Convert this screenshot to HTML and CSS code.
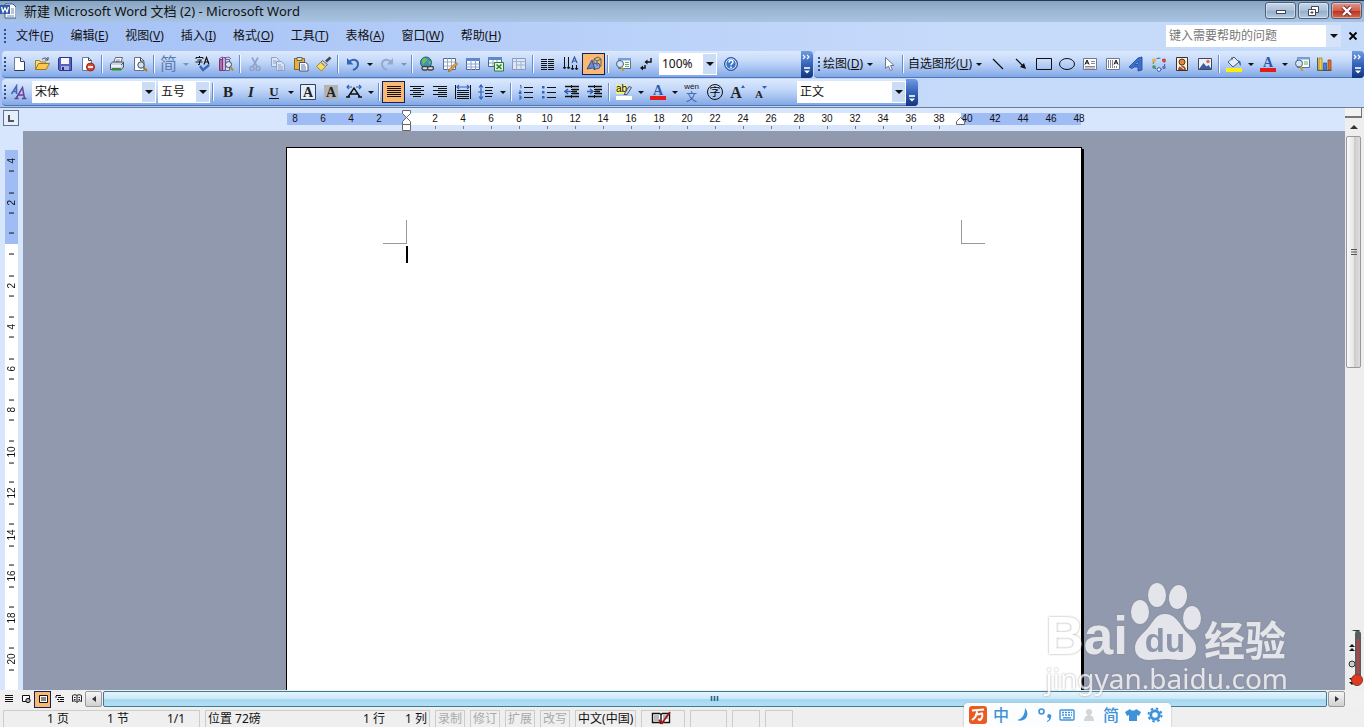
FILE: index.html
```
<!DOCTYPE html>
<html lang="zh-CN">
<head>
    <meta charset="UTF-8">
    <meta name="viewport" content="width=device-width, initial-scale=1.0">
    <title>新建 Microsoft Word 文档 (2) - Microsoft Word</title>
    <link rel="stylesheet" href="styles.css">
</head>
<body>

    <header class="titlebar">
        <svg class="app-icon" viewBox="0 0 16 16"><path d="M5 1h8l3 3v11H5z" fill="#fff" stroke="#3a5a94"/><path d="M11 6h3M11 8h3M11 10h3M7 13h7" stroke="#6d87b8"/><path d="M0 2h10v9H0z" fill="#2f5aa8"/><path d="M1.500 4l1.500 5 2-4 2 4 1.500-5" fill="none" stroke="#fff" stroke-width="1.300"/></svg>
        <h1 class="title">新建 Microsoft Word 文档 (2) - Microsoft Word</h1>
        <div class="win-btns">
            <button class="win" aria-label="最小化"><svg viewBox="0 0 14 12"><rect x="2.500" y="5.500" width="9" height="3" fill="#fff" stroke="#445"/></svg></button>
            <button class="win" aria-label="还原"><svg viewBox="0 0 14 12"><path d="M4.500 1.500h7v6h-7z" fill="#fff" stroke="#445"/><path d="M1.500 4.500h7v6h-7z" fill="#fff" stroke="#445"/><path d="M4 7h2v1H4z" fill="#99b" stroke="#445"/></svg></button>
            <button class="win win-close" aria-label="关闭"><svg viewBox="0 0 14 12"><path d="M3 2l8 8M11 2l-8 8" stroke="#723" stroke-width="4"/><path d="M3 2l8 8M11 2l-8 8" stroke="#fff" stroke-width="2.400"/></svg></button>
        </div>
    </header>

    <nav class="menubar">
        <i class="grip"></i>
        <button class="menu">文件(<u>F</u>)</button>
        <button class="menu">编辑(<u>E</u>)</button>
        <button class="menu">视图(<u>V</u>)</button>
        <button class="menu">插入(<u>I</u>)</button>
        <button class="menu">格式(<u>O</u>)</button>
        <button class="menu">工具(<u>T</u>)</button>
        <button class="menu">表格(<u>A</u>)</button>
        <button class="menu">窗口(<u>W</u>)</button>
        <button class="menu">帮助(<u>H</u>)</button>
        <div class="ask">
            <input class="ask-input" type="text" placeholder="键入需要帮助的问题" aria-label="键入需要帮助的问题">
            <button class="ask-arrow dd" aria-label="展开"></button>
        </div>
        <button class="doc-close" aria-label="关闭文档"><svg viewBox="0 0 10 10"><path d="M1.500 1.500l7 7M8.500 1.500l-7 7" stroke="#000" stroke-width="1.800"/></svg></button>
    </nav>

    <div class="bars">
        <div class="toolbar toolbar-main">
            <i class="grip"></i>
            <button class="btn" aria-label="新建"><svg viewBox="0 0 16 16"><path d="M3.500 1.500h6l4 4v9h-10z" fill="#fff" stroke="#6d7f9f"/><path d="M9.500 1.500v4h4" fill="#dbe4f2" stroke="#3b4c70"/><path d="M13.500 6v8.500h-10" fill="none" stroke="#2b3a5a"/></svg></button>
            <button class="btn" aria-label="打开"><svg viewBox="0 0 16 16"><path d="M1.500 13.500v-9h4l1 1.500h5v2.500" fill="#f7dc80" stroke="#a8812b"/><path d="M1.500 13.500l3-6h11l-3.500 6z" fill="#f9c84c" stroke="#9c7420"/><path d="M8 3.500c2-2 4-2 5.500 0M14 1v3h-3" fill="none" stroke="#444"/></svg></button>
            <button class="btn" aria-label="保存"><svg viewBox="0 0 16 16"><path d="M1.500 2.500l1-1h12v13h-12l-1-1z" fill="#5660c0" stroke="#2e3786"/><path d="M4 2h8v6H4z" fill="#f4f6ff"/><path d="M4 10h8v4H4z" fill="#a7aedd"/><path d="M5 11h2v3H5z" fill="#28306e"/></svg></button>
            <button class="btn" aria-label="权限"><svg viewBox="0 0 16 16"><path d="M2.500 1.500h6l3 3v10h-9z" fill="#fff" stroke="#667a9e"/><path d="M8.500 1.500v3h3" fill="none" stroke="#445"/><circle cx="10.500" cy="11" r="4" fill="#d8472f" stroke="#962817"/><path d="M8 11h5" stroke="#fff" stroke-width="1.800"/></svg></button>
            <i class="sep"></i>
            <button class="btn" aria-label="打印"><svg viewBox="0 0 16 16"><path d="M4.500 7l2-5.500h7l-2 5.500" fill="#fff" stroke="#667"/><path d="M7 4h4M6.500 5.500h4" stroke="#88a"/><path d="M1.500 8l2-2h11v5l-2 2.500h-11z" fill="#ccd3dc" stroke="#485468"/><path d="M2 9h10v2H2z" fill="#eef"/><path d="M3 12h9v2.500H3z" fill="#388b35"/><path d="M12 9l2.500-2.500" stroke="#485468"/></svg></button>
            <button class="btn" aria-label="打印预览"><svg viewBox="0 0 16 16"><path d="M2.500 1.500h6l3.500 3.500v9.500h-9.500z" fill="#fff" stroke="#5e7196"/><path d="M8.500 1.500v3.500h3.500" fill="none" stroke="#445"/><circle cx="9" cy="9" r="3.200" fill="#cde3f2" stroke="#444c58"/><path d="M11.500 11.500l3.500 3.500" stroke="#a8771d" stroke-width="2"/></svg></button>
            <i class="sep"></i>
            <button class="btn glyph-jian" aria-label="简繁转换">简</button><button class="dd dim" aria-label="更多"></button>
            <button class="btn" aria-label="拼写和语法"><svg viewBox="0 0 16 16"><path d="M1 3V1.500h7V3M4.500 0v1.500M2.500 4h4l-2 1.500V8.500h-1.500M.500 6h7" fill="none" stroke="#111"/><path d="M9 8.500l2.500-7 2.500 7M10 6h4" fill="none" stroke="#111" stroke-width="1.200"/><path d="M5 10l3 4 6-5" fill="none" stroke="#3b66ba" stroke-width="2.400"/></svg></button>
            <button class="btn" aria-label="信息检索"><svg viewBox="0 0 16 16"><path d="M1.500 3.500h3v11h-3z" fill="#b56ba8" stroke="#703b78"/><path d="M4.500 1.500h3v13h-3z" fill="#d5a8d6" stroke="#703b78"/><path d="M7.500 3.500h4v11h-4z" fill="#d4dff5" stroke="#58689a"/><path d="M1 3l3-2 3 1 4-1 2 2" fill="none" stroke="#8a5a9c"/><circle cx="10.500" cy="8.500" r="3" fill="#d8e8f4" stroke="#404860"/><path d="M12.500 11l2.500 3.500" stroke="#b28a22" stroke-width="2"/></svg></button>
            <i class="sep"></i>
            <button class="btn" aria-label="剪切"><svg viewBox="0 0 16 16"><path d="M5 1.500l5 9M11 1.500l-5 9" stroke="#8fa1c4" stroke-width="1.600"/><circle cx="5" cy="12.500" r="2" fill="none" stroke="#8fa1c4" stroke-width="1.400"/><circle cx="11" cy="12.500" r="2" fill="none" stroke="#8fa1c4" stroke-width="1.400"/></svg></button>
            <button class="btn" aria-label="复制"><svg viewBox="0 0 16 16"><path d="M1.500 1.500h5l2.500 2.500v6.500h-7.500z" fill="#d8e3f5" stroke="#8fa1c4"/><path d="M6.500 5.500h5l3 3v6h-8z" fill="#d8e3f5" stroke="#8fa1c4"/><path d="M3 5h3M3 7h3M8 9h3M8 11h5M8 13h5" stroke="#8fa1c4"/></svg></button>
            <button class="btn" aria-label="粘贴"><svg viewBox="0 0 16 16"><path d="M1.500 2.500h10v11h-10z" fill="#e8b23a" stroke="#8e651a"/><path d="M4 1.500h5v3H4z" fill="#ddd" stroke="#665"/><path d="M6.500 6.500h6l2.500 2v6.500h-8.500z" fill="#fff" stroke="#3f5686"/><path d="M8 9h4M8 11h5M8 13h5" stroke="#5a76ac"/></svg></button>
            <button class="btn" aria-label="格式刷"><svg viewBox="0 0 16 16"><path d="M14.500 1.500l-4.500 4" stroke="#445" stroke-width="2.600"/><path d="M6.500 4.500l5 4-2 2-5-4z" fill="#c9ccd6" stroke="#667"/><path d="M4.500 6.500l5 4-4 4.500-5-4.500z" fill="#f5dc62" stroke="#a58a24"/></svg></button>
            <i class="sep"></i>
            <button class="btn" aria-label="撤消"><svg viewBox="0 0 16 16"><path d="M4 6c4-4 9-2 9 2 0 3-2 5-5 6" fill="none" stroke="#3563b5" stroke-width="2"/><path d="M2 2v6.500h6.500z" fill="#3563b5"/></svg></button><button class="dd" aria-label="撤消列表"></button>
            <button class="btn" aria-label="恢复"><svg viewBox="0 0 16 16"><path d="M12 6c-4-4-9-2-9 2 0 3 2 5 5 6" fill="none" stroke="#94a9d0" stroke-width="2"/><path d="M14 2v6.500h-6.500z" fill="#94a9d0"/></svg></button><button class="dd dim" aria-label="恢复列表"></button>
            <i class="sep"></i>
            <button class="btn" aria-label="超链接"><svg viewBox="0 0 16 16"><circle cx="7" cy="6.500" r="5.500" fill="#3b94b8" stroke="#2c5c80"/><path d="M3 4c2-3 5-2 5 0s-3 2-3 4-2 0-2-4zM9 6l3-1-1 4z" fill="#71bd55"/><rect x="3" y="10.500" width="6" height="3.500" rx="1.700" fill="#dde" stroke="#444" stroke-width="1.400"/><rect x="8.500" y="10.500" width="6" height="3.500" rx="1.700" fill="#dde" stroke="#444" stroke-width="1.400"/></svg></button>
            <button class="btn" aria-label="表格和边框"><svg viewBox="0 0 16 16"><path d="M1.500 2.500h12v11h-12z" fill="#fff" stroke="#56688e"/><path d="M1.500 6h12M1.500 10h12M5.500 2.500v11M9.500 2.500v11" stroke="#98a8c8"/><path d="M7 13.500l7-7 1.500 1.500-7 7-2 .500z" fill="#f2a93a" stroke="#8a5b1a" stroke-width=".8"/></svg></button>
            <button class="btn" aria-label="插入表格"><svg viewBox="0 0 16 16"><path d="M1.500 2.500h13v11h-13z" fill="#fff" stroke="#45639e"/><path d="M1 2h14v3H1z" fill="#5e87ce"/><path d="M1.500 8h13M1.500 11h13M6 4v10M10.500 4v10" stroke="#8ba2cf"/></svg></button>
            <button class="btn" aria-label="插入 Excel 工作表"><svg viewBox="0 0 16 16"><path d="M.500 1.500h13v9h-13z" fill="#fff" stroke="#45639e"/><path d="M0 1h14v3H0z" fill="#5e87ce"/><path d="M1 7h12M5 4v6M9 4v6" stroke="#8ba2cf"/><path d="M6.500 6.500h9v8.500h-9z" fill="#e6f3e4" stroke="#2a7a35"/><path d="M8.500 8.500l5 4.500M13.500 8.500l-5 4.500" stroke="#28852f" stroke-width="1.600"/></svg></button>
            <button class="btn" aria-label="分栏表"><svg viewBox="0 0 16 16"><path d="M1.500 2.500h13v11h-13z" fill="#dce6f6" stroke="#8799bd"/><path d="M1.500 5.500h13M5.500 2.500v11M5.500 9h9M10 5.500v8" stroke="#a2b1cf"/></svg></button>
            <i class="sep"></i>
            <button class="btn" aria-label="分栏"><svg viewBox="0 0 16 16"><path d="M1 3.500h6M1 5.500h6M1 7.500h6M1 9.500h6M1 11.500h6M1 13.500h6M8 3.500h6M8 5.500h6M8 7.500h6M8 9.500h6M8 11.500h6M8 13.500h6" stroke="#111"/></svg></button>
            <button class="btn" aria-label="更改文字方向"><svg viewBox="0 0 16 16"><path d="M1.500 1v11M5.500 1v11M9.500 9v4M13.500 9v4M0 11l1.500 2 1.500-2M4 11l1.500 2 1.500-2" fill="none" stroke="#111"/><path d="M9 7l2.500-6 2.500 6M10 5h3" fill="none" stroke="#2f58a8" stroke-width="1.200"/><path d="M8 12l1.500 2 1.500-2M12 12l1.500 2 1.500-2" fill="none" stroke="#111"/></svg></button>
            <button class="btn on" aria-label="绘图"><svg viewBox="0 0 16 16"><path d="M8 3l4-2 3 2v7l-3 2-4-2z" fill="#e8c65a" stroke="#555d88"/><ellipse cx="10.500" cy="10" rx="3.500" ry="3" fill="#8fa6d8" stroke="#4a5a94"/><path d="M1 13l5-9 3 10-2.500-2z" fill="#6a86d6" stroke="#38509a"/><path d="M8 3l3 2v5M11 5l4-2" fill="none" stroke="#555d88"/></svg></button>
            <i class="sep"></i>
            <button class="btn" aria-label="文档结构图"><svg viewBox="0 0 16 16"><path d="M3.500 2.500h12v10h-12z" fill="#fff" stroke="#55709e"/><path d="M3 2h13v2.500H3z" fill="#7a9bd4"/><path d="M10 6.500h4M10 8.500h4M10 10.500h4" stroke="#5fae4f"/><circle cx="5" cy="8" r="3.500" fill="#cfe6f5" stroke="#47607f"/><path d="M6.500 11l2 4" stroke="#c29a30" stroke-width="2"/></svg></button>
            <button class="btn" aria-label="显示/隐藏编辑标记"><svg viewBox="0 0 16 16"><path d="M13 2v4H8M7 9v3H3" fill="none" stroke="#111" stroke-width="1.400"/><path d="M9.500 3.500v5L6.500 6zM5 9.500v5L2 12z" fill="#111"/></svg></button>
            <span class="combo combo-zoom"><select aria-label="显示比例"><option>100%</option></select></span>
            <button class="btn" aria-label="帮助"><svg viewBox="0 0 16 16"><circle cx="8" cy="8" r="6.500" fill="#3d74c8" stroke="#2b56a3"/><circle cx="8" cy="8" r="5.200" fill="none" stroke="#dce9fb"/><path d="M6 6.500c0-3 4-3 4-.500 0 1.500-2 1.500-2 3.200M8 10.500v1.500" fill="none" stroke="#fff" stroke-width="1.500"/></svg></button>
            <button class="more" aria-label="工具栏选项"><svg viewBox="0 0 10 24"><path d="M1 3l2 2-2 2M5 3l2 2-2 2" fill="none" stroke="#fff" stroke-width="1.200"/><path d="M2 16h6" stroke="#fff" stroke-width="1.600"/><path d="M2 18.500h6l-3 3z" fill="#fff"/></svg></button>
        </div>
        <div class="toolbar toolbar-draw">
            <i class="grip"></i>
            <button class="label-btn">绘图(<u>D</u>)<i class="tri"></i></button>
            <button class="btn" aria-label="选择对象"><svg viewBox="0 0 16 16"><path d="M4.500 1.500v11l3-2.500 2 4.500 2-1-2-4h3.500z" fill="#fff" stroke="#6c7a98"/></svg></button>
            <i class="sep"></i>
            <button class="label-btn">自选图形(<u>U</u>)<i class="tri"></i></button>
            <button class="btn" aria-label="直线"><svg viewBox="0 0 16 16"><path d="M3 3l10 10" stroke="#111" stroke-width="1.200"/></svg></button>
            <button class="btn" aria-label="箭头"><svg viewBox="0 0 16 16"><path d="M3 3l8 8" stroke="#111" stroke-width="1.200"/><path d="M13 13l-6-2 4-4z" fill="#111"/></svg></button>
            <button class="btn" aria-label="矩形"><svg viewBox="0 0 16 16"><path d="M.500 2.500h15v11h-15z" fill="none" stroke="#111"/></svg></button>
            <button class="btn" aria-label="椭圆"><svg viewBox="0 0 16 16"><ellipse cx="8" cy="8" rx="7.500" ry="5.500" fill="none" stroke="#111"/></svg></button>
            <button class="btn" aria-label="文本框"><svg viewBox="0 0 16 16"><path d="M1.500 2.500h13v11h-13z" fill="#fff" stroke="#6d7894"/><path d="M3 8.500l2-4.500 2 4.500M3.800 7h2.400" fill="none" stroke="#111"/><path d="M9 5.500h4M9 7.500h4M3 10.500h10M3 12h10" stroke="#889"/></svg></button>
            <button class="btn" aria-label="竖排文本框"><svg viewBox="0 0 16 16"><path d="M1.500 2.500h13v11h-13z" fill="#fff" stroke="#6d7894"/><path d="M9 8.500l2-4.500 2 4.500M9.800 7h2.400" fill="none" stroke="#111"/><path d="M3.500 4v8M5.500 4v8M7.500 4v8M9.500 10v2M11.500 10v2" stroke="#889"/></svg></button>
            <button class="btn" aria-label="插入艺术字"><svg viewBox="0 0 16 16"><path d="M1 11l9-9 4-1v13l-4 1v-4H6l-2 1.500zM7 8.500h3v-3z" fill="#3b6fd0" stroke="#1f468f" stroke-width=".8" fill-rule="evenodd"/></svg></button>
            <button class="btn" aria-label="插入组织结构图"><svg viewBox="0 0 16 16"><circle cx="8" cy="8" r="5.800" fill="none" stroke="#38589b" stroke-dasharray="4 2"/><circle cx="3" cy="4.500" r="2" fill="#e6b13e"/><circle cx="13" cy="4.500" r="2" fill="#cc4a3e"/><circle cx="13" cy="11.500" r="1.800" fill="#4c7ed0"/><circle cx="8" cy="13.500" r="1.800" fill="#fff" stroke="#38589b"/><circle cx="3" cy="11" r="1.800" fill="#3b9e52"/></svg></button>
            <button class="btn" aria-label="插入剪贴画"><svg viewBox="0 0 16 16"><path d="M2.500 1.500h11v13h-11z" fill="#fdf3d8" stroke="#333"/><circle cx="8" cy="6" r="3" fill="#d78a4a" stroke="#6b3315"/><path d="M4 14c0-6 8-6 8 0z" fill="#a05030"/><path d="M6 10l4 3" stroke="#fff"/></svg></button>
            <button class="btn" aria-label="插入图片"><svg viewBox="0 0 16 16"><path d="M1.500 2.500h13v11h-13z" fill="#e9f2fd" stroke="#445"/><path d="M2 13l4.500-6 3 3.500 2-1.500 3 4z" fill="#3a5d9e"/><circle cx="11" cy="5.500" r="1.700" fill="#e26a3c"/></svg></button>
            <i class="sep"></i>
            <button class="btn" aria-label="填充颜色"><svg viewBox="0 0 16 16"><path d="M2 6l6-5 5 5-6 5z" fill="#e4ecf8" stroke="#46597f"/><path d="M6 4V1" stroke="#46597f"/><path d="M12 4c3 1 3 3 3 6-2-1-2-3-2-4z" fill="#3c67b8"/><path d="M0 12h16v4H0z" fill="#ffee0a"/></svg></button><button class="dd" aria-label="更多填充颜色"></button>
            <button class="btn" aria-label="字体颜色"><svg viewBox="0 0 16 16"><text class="letter blue" x="8" y="11" font-size="14">A</text><path d="M0 12h16v4H0z" fill="#e31b1b"/></svg></button><button class="dd" aria-label="更多字体颜色"></button>
            <button class="btn" aria-label="查找"><svg viewBox="0 0 16 16"><path d="M3.500 1.500h12v10h-12z" fill="#fff" stroke="#55709e"/><path d="M3 1h13v2.500H3z" fill="#7a9bd4"/><path d="M10 6h4M10 8h4" stroke="#5fae4f"/><circle cx="5" cy="7.500" r="3.500" fill="#cfe6f5" stroke="#47607f"/><path d="M6.500 10.500l2 4.500" stroke="#c29a30" stroke-width="2"/></svg></button>
            <button class="btn" aria-label="插入图表"><svg viewBox="0 0 16 16"><path d="M.500 1.500v13h14" fill="none" stroke="#555"/><path d="M2 2h3v12H2z" fill="#f4cf3a" stroke="#997a12" stroke-width=".7"/><path d="M6.500 7h3v7h-3z" fill="#4a7ed6" stroke="#264a8f" stroke-width=".7"/><path d="M11 4h3v10h-3z" fill="#e0702d" stroke="#8a3b10" stroke-width=".7"/></svg></button>
            <button class="more" aria-label="工具栏选项"><svg viewBox="0 0 10 24"><path d="M1 3l2 2-2 2M5 3l2 2-2 2" fill="none" stroke="#fff" stroke-width="1.200"/><path d="M2 16h6" stroke="#fff" stroke-width="1.600"/><path d="M2 18.500h6l-3 3z" fill="#fff"/></svg></button>
        </div>
    </div>

    <div class="bars">
        <div class="toolbar">
            <i class="grip"></i>
            <button class="btn" aria-label="格式窗格"><svg viewBox="0 0 16 16"><path d="M.500 10l5-8v8M2 7.500h4" fill="none" stroke="#3f68b8" stroke-width="1.600"/><path d="M5 14.500l6.500-11 2 11M7.500 11h5.500M3.500 14.500h4M11 14.500h4.500" fill="none" stroke="#6a3f9c" stroke-width="1.500"/></svg></button>
            <span class="combo combo-font"><select aria-label="字体"><option>宋体</option></select></span>
            <span class="combo combo-size"><select aria-label="字号"><option>五号</option></select></span>
            <i class="sep"></i>
            <button class="btn" aria-label="加粗"><svg viewBox="0 0 16 16"><text class="letter" x="8" y="13" font-size="15">B</text></svg></button>
            <button class="btn" aria-label="倾斜"><svg viewBox="0 0 16 16"><text class="letter slant" x="8" y="13" font-size="15">I</text></svg></button>
            <button class="btn" aria-label="下划线"><svg viewBox="0 0 16 16"><text class="letter" x="8" y="12" font-size="13">U</text><path d="M3 14.500h10" stroke="#111"/></svg></button><button class="dd" aria-label="下划线样式"></button>
            <button class="btn" aria-label="字符边框"><svg viewBox="0 0 16 16"><path d="M.500 .500h15v15h-15z" fill="#e3edfb" stroke="#33415f"/><text class="letter" x="8" y="13" font-size="14">A</text></svg></button>
            <button class="btn" aria-label="字符底纹"><svg viewBox="0 0 16 16"><path d="M1 1h14v14H1z" fill="#b3b3b3"/><text class="letter" x="8" y="13" font-size="14">A</text></svg></button>
            <button class="btn" aria-label="字符缩放"><svg viewBox="0 0 16 16"><path d="M2 13L8 4l6 9M4 10h8M0 13h4M12 13h4" fill="none" stroke="#111" stroke-width="1.400"/><path d="M6 3H1M10 3h5M3 1L1 3l2 2M13 1l2 2-2 2" fill="none" stroke="#2f62b8" stroke-width="1.200"/></svg></button><button class="dd" aria-label="缩放比例"></button>
            <i class="sep"></i>
            <button class="btn on" aria-label="两端对齐"><svg viewBox="0 0 16 16"><path d="M1 2.500h14M1 4.500h14M1 6.500h14M1 8.500h14M1 10.500h14M1 12.500h14" stroke="#111"/></svg></button>
            <button class="btn" aria-label="居中"><svg viewBox="0 0 16 16"><path d="M1 2.500h14M4 4.500h8M1 6.500h14M4 8.500h8M1 10.500h14M4 12.500h8" stroke="#111"/></svg></button>
            <button class="btn" aria-label="右对齐"><svg viewBox="0 0 16 16"><path d="M1 2.500h14M6 4.500h9M1 6.500h14M6 8.500h9M1 10.500h14M6 12.500h9" stroke="#111"/></svg></button>
            <button class="btn" aria-label="分散对齐"><svg viewBox="0 0 16 16"><path d="M.500 1v14M15.500 1v14" stroke="#111"/><path d="M2 3h12M4 1L2 3l2 2M12 1l2 2-2 2" fill="none" stroke="#2f62b8" stroke-width="1.200"/><path d="M2 6.500h12M2 8.500h12M2 10.500h12M2 12.500h12M2 14.500h12" stroke="#111"/></svg></button>
            <button class="btn" aria-label="行距"><svg viewBox="0 0 16 16"><path d="M3 1v14M1 3.500L3 1l2 2.500M1 12.500L3 15l2-2.500M0 8h6" fill="none" stroke="#2f62b8" stroke-width="1.200"/><path d="M7 3.500h8M7 6.500h7M7 9.500h8M7 12.500h7" stroke="#111"/></svg></button><button class="dd" aria-label="行距选项"></button>
            <i class="sep"></i>
            <button class="btn" aria-label="编号"><svg viewBox="0 0 16 16"><path d="M2 1.500h1v3M1 7h2v1.500H1v1h2.500M1 12h2v3H1M1.500 13.500H3" fill="none" stroke="#2f62b8"/><path d="M6 3.500h9M6 8.500h9M6 13.500h9" stroke="#111"/></svg></button>
            <button class="btn" aria-label="项目符号"><svg viewBox="0 0 16 16"><path d="M1 2h2.500v2.500H1zM1 7h2.500v2.500H1zM1 12h2.500v2.500H1z" fill="#2f62b8"/><path d="M6 3.500h9M6 8.500h9M6 13.500h9" stroke="#111"/></svg></button>
            <button class="btn" aria-label="减少缩进量"><svg viewBox="0 0 16 16"><path d="M1 2.500h14M8 5.500h7M8 7.500h5M8 9.500h7M1 12.500h14" stroke="#111" stroke-width="1.300"/><path d="M7 7.500H1M4 5L1 7.500 4 10" fill="none" stroke="#2f62b8" stroke-width="1.500"/><path d="M7.500 1v14" stroke="#111" stroke-dasharray="1 1"/></svg></button>
            <button class="btn" aria-label="增加缩进量"><svg viewBox="0 0 16 16"><path d="M1 2.500h14M8 5.500h7M8 7.500h5M8 9.500h7M1 12.500h14" stroke="#111" stroke-width="1.300"/><path d="M0 7.500h6M3 5l3 2.500L3 10" fill="none" stroke="#2f62b8" stroke-width="1.500"/><path d="M7.500 1v14" stroke="#111" stroke-dasharray="1 1"/></svg></button>
            <i class="sep"></i>
            <button class="btn" aria-label="突出显示"><svg viewBox="0 0 16 16"><path d="M0 1h11v9H0z" fill="#f3f17c"/><text class="ab" x="0" y="8" font-size="10">ab</text><path d="M8 10.500l5-8 2.500 1-4.500 7z" fill="#c9d6ee" stroke="#46536f"/><path d="M0 12h16v4H0z" fill="#fff"/></svg></button><button class="dd" aria-label="突出显示颜色"></button>
            <button class="btn" aria-label="字体颜色"><svg viewBox="0 0 16 16"><text class="letter blue" x="8" y="11" font-size="14">A</text><path d="M0 12h16v4H0z" fill="#e31b1b"/></svg></button><button class="dd" aria-label="更多字体颜色"></button>
            <button class="btn btn-pinyin" aria-label="拼音指南"><span class="wen">wén</span><span class="zi">文</span></button>
            <button class="btn" aria-label="带圈字符"><svg viewBox="0 0 16 16"><circle cx="8" cy="8" r="7.500" fill="none" stroke="#111"/><text class="cjk" x="8" y="12" font-size="11">字</text></svg></button>
            <button class="btn" aria-label="增大字体"><svg viewBox="0 0 16 16"><text class="letter" x="6" y="14" font-size="16">A</text><path d="M11 4l2-3 2 3z" fill="#2f62b8"/></svg></button>
            <button class="btn" aria-label="缩小字体"><svg viewBox="0 0 16 16"><text class="letter" x="6" y="14" font-size="11">A</text><path d="M9 2h5l-2.500 3z" fill="#2f62b8"/></svg></button>
            <span class="combo combo-style"><select aria-label="样式"><option>正文</option></select></span>
            <button class="more" aria-label="工具栏选项"><svg viewBox="0 0 10 24"><path d="M2 16h6" stroke="#fff" stroke-width="1.600"/><path d="M2 18.500h6l-3 3z" fill="#fff"/></svg></button>
        </div>
    </div>

    <main class="workspace">
        <div class="corner"><button class="tab-kind" aria-label="制表符"><svg viewBox="0 0 12 12"><path d="M4 3v6h5" fill="none" stroke="#555" stroke-width="2"/></svg></button></div>

        <div class="hruler">
            <div class="hscale">
                <span>8</span><span>6</span><span>4</span><span>2</span><span></span>
                <span class="tick">2</span><span class="tick">4</span><span class="tick">6</span><span class="tick">8</span><span class="tick">10</span><span class="tick">12</span><span class="tick">14</span><span class="tick">16</span><span class="tick">18</span><span class="tick">20</span><span class="tick">22</span><span class="tick">24</span><span class="tick">26</span><span class="tick">28</span><span class="tick">30</span><span class="tick">32</span><span class="tick">34</span><span class="tick">36</span><span class="tick">38</span>
                <span>40</span><span>42</span><span>44</span><span>46</span><span>48</span>
                <svg class="indent indent-left" viewBox="0 0 9 21"><path d="M.500 .500h8v3l-4 4-4-4zM.500 14.500v-3l4-4 4 4v3zM.500 14.500h8v6h-8z" fill="#fff" stroke="#666"/></svg>
                <svg class="indent indent-right" viewBox="0 0 9 8"><path d="M.500 7.500v-3l4-4 4 4v3z" fill="#fff" stroke="#666"/></svg>
            </div>
        </div>

        <div class="vruler">
            <div class="vscale">
                <span>4</span><span>2</span><span></span><span>2</span><span>4</span><span>6</span><span>8</span><span>10</span><span>12</span><span>14</span><span>16</span><span>18</span><span>20</span>
            </div>
        </div>

        <div class="canvas">
            <article class="page">
                <div class="crops"><i class="crop crop-left"></i><i class="crop crop-right"></i></div>
                <div class="caret"></div>
            </article>
        </div>

        <div class="vscroll">
            <button class="split" aria-label="拆分"></button>
            <button class="v-up" aria-label="向上滚动"><svg viewBox="0 0 8 6"><path d="M0 5h8L4 1z" fill="#333"/></svg></button>
            <div class="v-track"><div class="v-thumb"><svg viewBox="0 0 8 8"><path d="M1 1.500h6M1 4h6M1 6.500h6" stroke="#555"/></svg></div></div>
            <div class="browse">
                <svg viewBox="0 0 18 60">
                    <path d="M4 18h6M7 14l-3 3h6zM7 18l-3 3h6z" fill="#111"/>
                    <circle cx="7" cy="34" r="3" fill="#ccc" stroke="#333"/>
                    <path d="M4 48h6l-3 3zM4 52h6l-3 3z" fill="#111"/>
                    <path d="M6 0h9l-2 2z" fill="#333"/>
                    <path d="M13 4v45" stroke="#555d5d" stroke-width="6" stroke-linecap="round"/>
                    <path d="M13 9v40" stroke="#a94848" stroke-width="3"/>
                    <circle cx="12" cy="50" r="5.500" fill="#e33a1e" stroke="#7d3a32"/>
                </svg>
            </div>
        </div>
    </main>

    <div class="hscroll">
        <button class="view" aria-label="普通视图"><svg viewBox="0 0 12 12"><path d="M2 2.500h8M2 4.500h8M2 6.500h8M2 8.500h8" stroke="#111"/></svg></button>
        <button class="view" aria-label="Web 版式视图"><svg viewBox="0 0 12 12"><path d="M2.500 2.500h7v6h-7z" fill="#fff" stroke="#111"/><circle cx="8" cy="7.500" r="2.200" fill="#aaa" stroke="#111"/></svg></button>
        <button class="view on" aria-label="页面视图"><svg viewBox="0 0 12 12"><path d="M2.500 2.500h8v7h-8z" fill="#fff" stroke="#111"/><path d="M4 5h5M4 7h5" stroke="#111"/></svg></button>
        <button class="view" aria-label="大纲视图"><svg viewBox="0 0 12 12"><path d="M2 2.500h5M4 4.500h6M6 6.500h4M4 8.500h6M1 4h2M3 6.500h2" stroke="#111"/></svg></button>
        <button class="view" aria-label="阅读版式"><svg viewBox="0 0 12 12"><path d="M1.500 2.500c2-1 3-1 4.500 0 1.500-1 2.500-1 4.500 0v6c-2-1-3-1-4.500 1-1.500-2-2.500-2-4.500-1zM6 2.500v7M3 4.500h1.500M3 6.500h1.500M7.500 4.500h1.500M7.500 6.500h1.500" fill="none" stroke="#222"/></svg></button>
        <button class="h-arrow" aria-label="向左滚动"><svg viewBox="0 0 8 8"><path d="M6 1v6L2 4z" fill="#333"/></svg></button>
        <div class="h-thumb"><svg viewBox="0 0 10 8"><path d="M1.500 1v5M4.500 1v5M7.500 1v5" stroke="#2b6688" stroke-width="1.600"/></svg></div>
        <button class="h-arrow" aria-label="向右滚动"><svg viewBox="0 0 8 8"><path d="M2 1v6l4-3z" fill="#333"/></svg></button>
    </div>

    <footer class="status">
        <div class="pane pane-page"><span>1 页</span><span>1 节</span><span>1/1</span></div>
        <div class="pane pane-pos"><span class="pos">位置 72磅</span><span>1 行</span><span>1 列</span></div>
        <div class="pane off">录制</div>
        <div class="pane off">修订</div>
        <div class="pane off">扩展</div>
        <div class="pane off">改写</div>
        <div class="pane">中文(中国)</div>
        <div class="pane pane-book"><svg viewBox="0 0 20 14"><path d="M1.500 2.500l7 0 1.500 1 1.500-1h7v9h-7l-1.500 1-1.500-1h-7zM10 3.500v9" fill="#fff" stroke="#111" stroke-width="1.400"/><path d="M3 5h5M3 7h5M3 9h5M12 5h5M12 7h5" stroke="#777"/><path d="M8 9l3 3 8-11" fill="none" stroke="#a31818" stroke-width="1.800"/></svg></div>
        <div class="pane pane-blank"></div>
        <div class="pane pane-small"></div>
        <div class="pane pane-small"></div>
    </footer>

    <div class="ime">
        <svg class="ime-logo" viewBox="0 0 18 18"><rect width="18" height="18" rx="3" fill="#ec5a24"/><path d="M3 4.500l12-1M8 5c0 4-2 7-5 9M6 9l7-1.500c1 3 0 5-2 6.500l-2-1" fill="none" stroke="#fff" stroke-width="2"/></svg>
        <span>中</span>
        <svg viewBox="0 0 16 16"><path d="M10 1c6 7 0 15-8 12 5-1 8-5 8-12z" fill="#3f92d8"/></svg>
        <svg viewBox="0 0 16 16"><circle cx="4.500" cy="4.500" r="2.500" fill="none" stroke="#3f92d8" stroke-width="1.600"/><path d="M10 14c2-1 2.500-2 2-3a2 2 0 1 1 2-1c0 2-1 4-4 5z" fill="#3f92d8"/></svg>
        <svg viewBox="0 0 16 16"><rect x="1" y="3" width="14" height="10" rx="1" fill="none" stroke="#3f92d8" stroke-width="1.400"/><path d="M3 5.500h10M3 8h10" stroke="#3f92d8" stroke-width="1.400" stroke-dasharray="2 1"/><path d="M4 10.800h8" stroke="#3f92d8" stroke-width="1.400"/></svg>
        <svg viewBox="0 0 16 16"><circle cx="8" cy="5" r="3" fill="#d3d5d8"/><path d="M3 14c0-8 10-8 10 0z" fill="#d3d5d8"/></svg>
        <span>简</span>
        <svg viewBox="0 0 16 16"><path d="M5 2c1 2 5 2 6 0l5 3-2 4-2-1v6H4V8L2 9 0 5z" fill="#3f92d8"/></svg>
        <svg viewBox="0 0 16 16"><circle cx="8" cy="8" r="4.200" fill="none" stroke="#3f92d8" stroke-width="2.800"/><circle cx="8" cy="8" r="6.500" fill="none" stroke="#3f92d8" stroke-width="2" stroke-dasharray="2.500 2.600"/></svg>
    </div>

    <div class="mark">
        <div class="mark-top">
            <span class="mark-bai">Bai</span>
            <svg class="mark-paw" viewBox="0 0 72 78"><g fill="#fff"><ellipse cx="10" cy="29" rx="9" ry="12"/><ellipse cx="27" cy="12" rx="9" ry="12"/><ellipse cx="48" cy="14" rx="9" ry="12" transform="rotate(10 48 14)"/><ellipse cx="62" cy="35" rx="9" ry="12"/><path d="M35 31c9 0 14 8 18 14s13 11 13 20-8 12-15 12-11-1-16-1-10 1-16 1S5 74 5 65s8-14 13-20 8-14 17-14z"/></g><text class="mark-du" x="35" y="69" font-size="33">du</text></svg>
            <span class="mark-cjk">经验</span>
        </div>
        <div class="mark-url">jingyan.baidu.com</div>
    </div>

</body>
</html>
```
FILE: styles.css
```
* {box-sizing:border-box;}
body {
    display:flex;
    flex-direction:column;
    height:100vh;
    margin:0;
    overflow:hidden;
    font:12px/16px "Noto Sans", "Noto Sans CJK SC", sans-serif;
    color:#111;
    background:linear-gradient(90deg, #a3c0f6, #c6dafa 70%);
}
button {
    display:flex;
    align-items:center;
    justify-content:center;
    flex:none;
    margin:0;
    padding:0;
    border:0;
    background:none;
    font:inherit;
    color:inherit;
}
svg {display:block; flex:none;}

/* title bar */
.titlebar {
    display:flex;
    align-items:center;
    flex:none;
    height:22px;
    padding:0 2px 2px 0;
    border-top:1px solid #26384e;
    background:linear-gradient(#86a3c2, #9bb7d4 50%, #a9c4e2);
}
.app-icon {width:16px; height:16px;}
.title {
    flex:1;
    margin:0 0 0 8px;
    font-size:13px;
    font-weight:400;
    line-height:18px;
}
.win-btns {display:flex; align-self:flex-start; gap:2px; padding-top:1px;}
.win {
    width:31px;
    height:17px;
    border:1px solid #4b607c;
    border-radius:3px;
    background:linear-gradient(#c7d7e8, #a9bfd7 50%, #92adc9 51%, #b4cae0);
    box-shadow:inset 0 0 0 1px rgba(255,255,255,.4);
}
.win svg {width:14px; height:12px;}
.win-close {background:linear-gradient(#e1988a, #cf5f4c 50%, #b9301b 51%, #d2694d);}

/* menu bar */
.menubar {
    display:flex;
    align-items:center;
    gap:1px;
    flex:none;
    height:29px;
    padding:0 6px 2px 2px;
}
.grip {
    flex:none;
    width:5px;
    height:16px;
    background:repeating-linear-gradient(#35507f 0 2px, transparent 2px 4px) 2px 1px / 2px 14px no-repeat;
}
.menu {height:22px; padding:0 8px;}
.ask {display:flex; margin-left:auto; width:175px; height:22px; background:#fff;}
.ask-input {
    flex:1;
    min-width:0;
    padding:0 3px;
    border:0;
    background:none;
    font:inherit;
    outline:0;
}
.ask-input::placeholder {color:#777;}
.doc-close {margin-left:6px;}
.doc-close svg {width:10px; height:10px;}

/* toolbars */
.bars {display:flex; gap:1px; flex:none; height:28px; padding-left:2px;}
.toolbar {
    display:flex;
    align-items:center;
    flex:none;
    height:27px;
    border-bottom:1px solid #4c76bd;
    border-radius:4px;
    background:linear-gradient(#dce9fd, #c3d8f9 40%, #a9c5f2 65%, #82a8e4);
}
.toolbar-main {flex:1;}
.toolbar-main .more {margin-left:auto;}
.toolbar-draw {padding-left:2px;}
.toolbar-draw .more {margin-left:16px;}
.btn {width:23px; height:22px;}
.btn svg {width:16px; height:16px;}
.on {border:1px solid #14205c; background:#fbb870;}
.sep {
    flex:none;
    width:6px;
    height:18px;
    background:linear-gradient(90deg, transparent 2px, #6a8ccb 2px 3px, #f4f8ff 3px 4px, transparent 4px);
}
.dd {width:11px; height:22px;}
.dd::before, .tri {
    content:"";
    width:0;
    border:3px solid transparent;
    border-top-color:#111;
    border-bottom:0;
}
.dim::before {border-top-color:#7f92ba;}
.tri {margin-left:4px;}
.ask-arrow {width:15px; background:#d5e2f8;}
.ask-arrow::before, .combo::after {border-width:4px 4px 0;}
.glyph-jian {font-size:17px; color:#5f7cb0;}
.label-btn {height:22px; padding:0 4px 0 2px;}
.combo {
    position:relative;
    flex:none;
    height:22px;
    margin-left:2px;
    border:1px solid #fff;
    background:linear-gradient(90deg, #fff, #fff) left / calc(100% - 13px) 100% no-repeat, #cbdcf6;
}
.combo::after {
    content:"";
    position:absolute;
    top:8px;
    right:2px;
    border-style:solid;
    border-color:#111 transparent transparent;
    pointer-events:none;
}
.combo select {
    width:100%;
    height:20px;
    padding:0 2px;
    border:0;
    appearance:none;
    background:none;
    font:inherit;
    color:inherit;
}
.combo-zoom {width:58px; margin-right:2px;}
.combo-font {width:124px;}
.combo-size {width:52px;}
.combo-style {width:109px; margin-left:25px;}
.more {
    width:12px;
    height:27px;
    border-radius:0 4px 4px 0;
    background:linear-gradient(#6f9be0, #3563b8 50%, #11357f);
}
.more svg {width:10px; height:24px;}
.letter {
    font-family:"Liberation Serif", serif;
    font-weight:700;
    text-anchor:middle;
    fill:#222;
}
.slant {font-style:italic;}
.blue {fill:#2f58a8;}
.ab {font-family:"Liberation Sans", sans-serif; fill:#111;}
.cjk {font-family:"Noto Sans CJK SC", sans-serif; text-anchor:middle;}
.btn-pinyin {flex-direction:column;}
.wen {font:8px/9px "Liberation Sans", sans-serif;}
.zi {font-size:11px; line-height:11px; color:#2f58a8;}

/* rulers and page */
.workspace {
    display:grid;
    grid-template:23px 1fr / 23px 1fr 19px;
    flex:1;
    min-height:0;
    border-top:1px solid #6d7f98;
    background:#d7e6fc;
}
.corner {padding:2px 0 0 3px;}
.tab-kind {width:16px; height:16px; border:1px solid #5d7190; background:#e6effc;}
.tab-kind svg {width:12px; height:12px;}
.hruler {display:flex; justify-content:center; min-width:0;}
.hscale {
    position:relative;
    display:flex;
    flex:none;
    width:794px;
    height:12px;
    margin-top:5px;
    background:linear-gradient(90deg, #a0bcf5 120px, #fff 120px 674px, #a0bcf5 674px);
    font:10px/12px "Liberation Sans", sans-serif;
}
.hscale span {flex:none; width:28px; text-align:center;}
.hscale span:first-child {margin-left:-6px;}
.tick::after {
    content:"";
    display:block;
    width:1px;
    height:3px;
    margin:1px auto 0;
    background:#778;
}
.indent {position:absolute; width:9px;}
.indent-left {left:115px; top:-3px; height:21px;}
.indent-right {left:669px; top:4px; height:8px;}
.vruler {display:flex; min-height:0; padding:9px 5px 10px;}
.vscale {
    display:flex;
    flex-direction:column;
    width:13px;
    background:linear-gradient(transparent 10px, #a0bcf5 10px 104px, #fff 104px);
    box-shadow:0 10px 0 #fff;
    font:10px/12px "Liberation Sans", sans-serif;
}
.vscale span {
    display:flex;
    align-items:center;
    justify-content:space-evenly;
    flex:1;
    padding:4px 0;
    writing-mode:vertical-rl;
    transform:rotate(180deg);
}
.vscale span:empty {justify-content:center; gap:20px;}
.vscale span::before, .vscale span::after {
    content:"";
    width:5px;
    height:1px;
    background:#111;
}
.vscale span:first-child::after {visibility:hidden;}
.canvas {
    display:flex;
    justify-content:center;
    min-width:0;
    padding-top:16px;
    overflow:hidden;
    background:#9199ae;
}
.page {
    flex:none;
    width:796px;
    padding:72px 96px 0;
    border:1px solid #000;
    border-bottom:0;
    background:#fff;
    box-shadow:2px 2px 0 #000;
}
.crops {display:flex; justify-content:space-between;}
.crop {width:24px; height:24px; border-bottom:1px solid #999;}
.crop-left {border-right:1px solid #999;}
.crop-right {border-left:1px solid #999;}
.caret {width:2px; height:17px; margin:2px 0 0 23px; background:#000;}

/* vertical scroll bar */
.vscroll {
    display:flex;
    flex-direction:column;
    grid-area:1 / 3 / 3 / 4;
    background:#eee;
}
.split {height:10px; margin-right:2px; border:1px solid #777; border-width:0 1px 2px 0; background:#f2f2f2;}
.v-up {height:18px; padding-right:2px;}
.v-up svg {width:8px; height:6px;}
.v-track {flex:1; padding:0 3px 0 1px;}
.v-thumb {
    display:flex;
    align-items:center;
    justify-content:center;
    height:47%;
    border:1px solid #999;
    border-radius:2px;
    background:linear-gradient(90deg, #fafafa, #e6e6e6 50%, #cbcbcf 52%, #dedee0);
}
.v-thumb svg {width:8px; height:8px;}
.browse svg {width:18px; height:60px;}

/* view buttons and horizontal scroll bar */
.hscroll {
    display:flex;
    align-items:center;
    flex:none;
    height:18px;
    padding-right:19px;
    background:#f0f0f0;
}
.view {width:17px; height:17px;}
.view svg {width:12px; height:12px;}
.h-arrow {
    width:17px;
    height:16px;
    border:1px solid #999;
    border-radius:2px;
    background:linear-gradient(#f7f7f7, #d0d0d0);
}
.h-arrow svg {width:8px; height:8px;}
.h-thumb {
    display:flex;
    align-items:center;
    justify-content:center;
    flex:1;
    height:16px;
    margin:0 1px;
    border:1px solid #3d7b91;
    border-radius:2px;
    background:linear-gradient(#e3f4fc, #cfeaf9 45%, #a4d6f0 55%, #b5e0f5);
}
.h-thumb svg {width:10px; height:8px;}

/* status bar */
.status {
    display:flex;
    flex:none;
    gap:5px;
    height:19px;
    padding:2px 3px 0;
    background:#efefef;
}
.pane {
    height:17px;
    padding:0 2px;
    border:1px solid #ccc;
    border-bottom:0;
    white-space:nowrap;
}
.off {color:#aaa;}
.pane-page {display:flex; width:197px; padding-left:43px; gap:38px;}
.pane-pos {display:flex; width:225px; gap:20px;}
.pos {margin-right:auto;}
.pane-book {width:44px; padding-left:9px;}
.pane-book svg {width:20px; height:14px;}
.pane-blank {width:37px;}
.pane-small {width:28px;}

/* input method bar floats over the window */
.ime {
    position:absolute;
    right:193px;
    bottom:0;
    display:flex;
    align-items:center;
    gap:6px;
    height:24px;
    padding:0 8px 0 5px;
    border-radius:4px 4px 0 0;
    background:#fcfdff;
    box-shadow:0 0 2px #9aa;
    font-size:16px;
    font-weight:500;
    color:#3f92d8;
}
.ime svg {width:16px; height:16px;}
.ime .ime-logo {width:18px; height:18px;}

/* site logo in the corner */
.mark {
    position:absolute;
    right:70px;
    bottom:32px;
    opacity:.75;
    color:#fff;
    filter:drop-shadow(0 0 1px #888);
}
.mark-top {display:flex; align-items:flex-end; justify-content:flex-end; gap:2px; padding-right:8px;}
.mark-bai {font:700 53px/50px "Liberation Sans", sans-serif;}
.mark-paw {width:72px; height:78px;}
.mark-cjk {font:700 41px/46px "Noto Sans CJK SC", sans-serif;}
.mark-du {
    font-family:"Liberation Sans", sans-serif;
    font-weight:700;
    text-anchor:middle;
    fill:#8f97ad;
}
.mark-url {font:28px/34px "Noto Sans", sans-serif;}
```
